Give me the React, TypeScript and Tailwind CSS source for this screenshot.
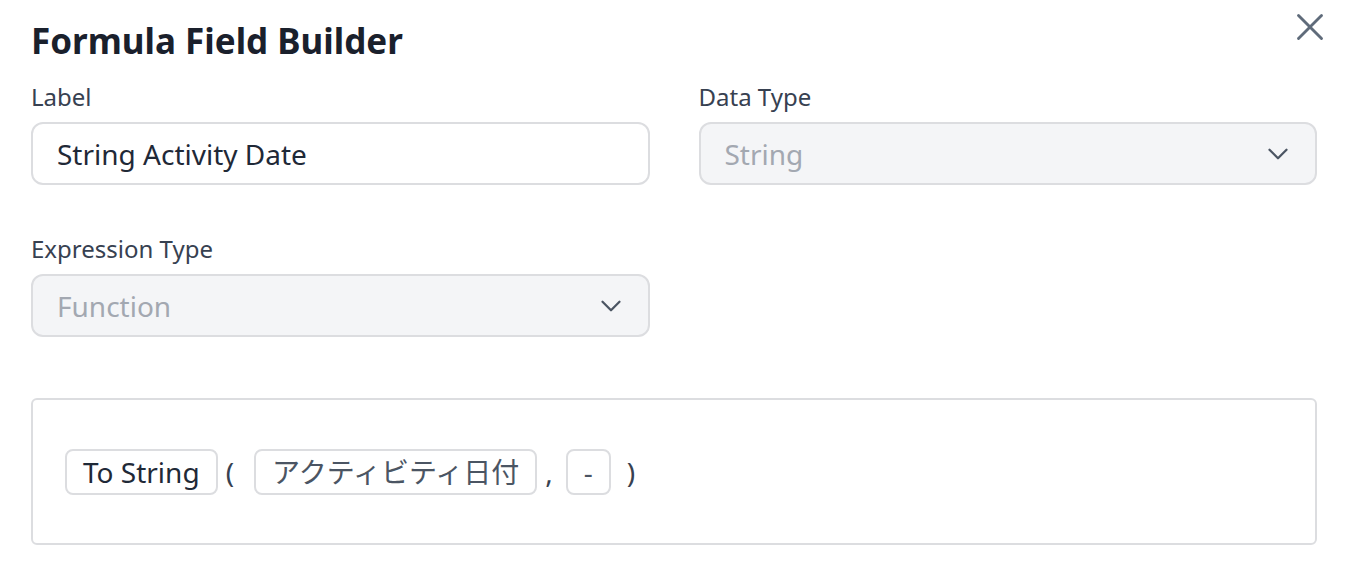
import React from 'react';
import { X, ChevronDown } from 'lucide-react';

const font = { fontFamily: '"Noto Sans", "Noto Sans CJK JP", sans-serif' };

const Field = ({ label, children }: { label: string; children: React.ReactNode }) => (
    <div className="flex flex-col">
        <label className="text-[24px] leading-[32px] text-[#374151] mb-[9px]">{label}</label>
        {children}
    </div>
);

const Select = ({ value }: { value: string }) => (
    <div className="h-[63px] rounded-[12px] border-2 border-[#dcdde0] bg-[#f4f5f7] flex items-center justify-between pl-[24px] pr-[20px]">
        <span className="text-[28px] text-[#a3a8b1]">{value}</span>
        <ChevronDown size={34} strokeWidth={1.6} className="text-[#4b5563]" />
    </div>
);

const Chip = ({ children, dark }: { children: React.ReactNode; dark?: boolean }) => (
    <span className={`h-[46px] px-[16px] flex items-center rounded-[8px] border-2 border-[#dcdde0] text-[28px] ${dark ? 'text-[#1f2937]' : 'text-[#4b5563]'}`}>
        {children}
    </span>
);

export default function App() {
    return (
        <div style={font} className="w-[1350px] h-[584px] bg-white relative pl-[31px] pr-[33px] pt-[17px]">
            <button className="absolute right-[17px] top-[4px] text-[#5f6b7a]">
                <X size={46} strokeWidth={1.5} />
            </button>

            <h1 className="text-[35px] leading-[48px] font-bold text-[#1a202c]">Formula Field Builder</h1>

            <div className="grid grid-cols-2 gap-x-[49px] mt-[16px]">
                <Field label="Label">
                    <div className="h-[63px] rounded-[12px] border-2 border-[#dcdde0] bg-white flex items-center pl-[24px]">
                        <span className="text-[28px] text-[#1f2937]">String Activity Date</span>
                    </div>
                </Field>
                <Field label="Data Type">
                    <Select value="String" />
                </Field>
            </div>

            <div className="grid grid-cols-2 gap-x-[49px] mt-[48px]">
                <Field label="Expression Type">
                    <Select value="Function" />
                </Field>
            </div>

            <div className="mt-[61px] h-[147px] rounded-[6px] border-2 border-[#dcdde0] flex items-center pl-[32px] text-[28px] text-[#374151]">
                <Chip dark>To String</Chip>
                <span className="ml-[8px] mr-[20px]">(</span>
                <Chip>アクティビティ日付</Chip>
                <span className="ml-[8px] mr-[13px]">,</span>
                <Chip>-</Chip>
                <span className="ml-[16px]">)</span>
            </div>
        </div>
    );
}
